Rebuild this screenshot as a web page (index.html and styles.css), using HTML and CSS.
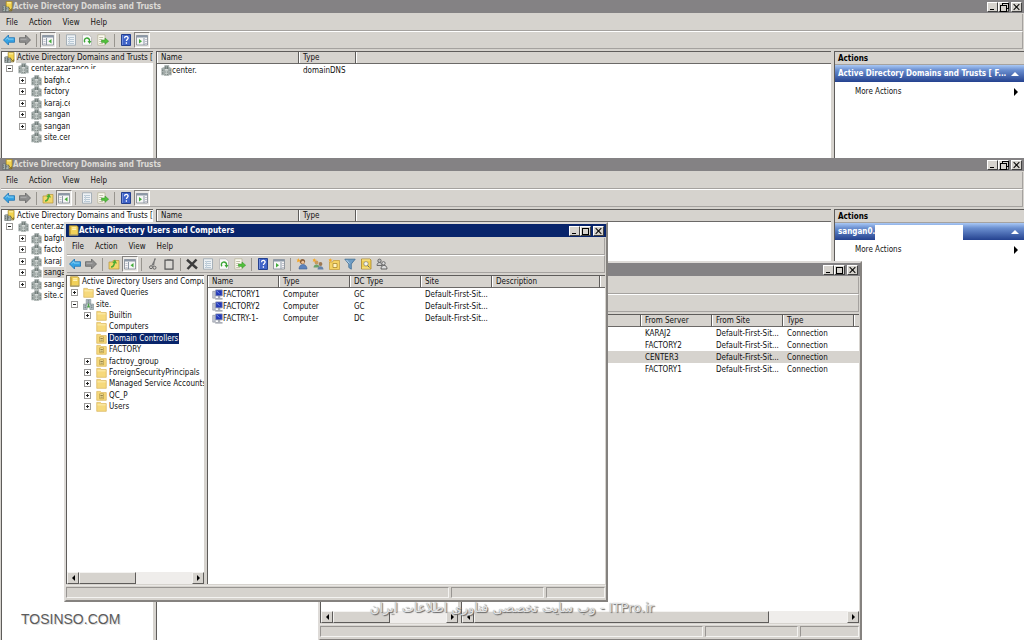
FILE: index.html
```html
<!DOCTYPE html>
<html lang="en">
<head>
    <meta charset="UTF-8">
    <meta name="viewport" content="width=device-width, initial-scale=1.0">
    <title>Active Directory</title>
    <link rel="stylesheet" href="styles.css">
</head>
<body>
    <svg class="sprite" aria-hidden="true">
        <symbol id="i-back" viewBox="0 0 12 12"><path d="M.5 6 5.500 1v2.700h6v4.600h-6V11z" fill="#35a3e4" stroke="#1f74b4" stroke-width=".8"/><path d="M2.500 5.700 5 3.500v1.600h5.500" fill="none" stroke="#9adcf8" stroke-width=".8"/></symbol>
        <symbol id="i-forward" viewBox="0 0 12 12"><path d="M11.500 6 6.500 1v2.700h-6v4.600h6V11z" fill="#8e8e8e" stroke="#666" stroke-width=".8"/><path d="M1.500 5.200h6" stroke="#bbb" stroke-width=".8"/></symbol>
        <symbol id="i-up" viewBox="0 0 12 12"><path d="M1 4h3l1-1.500h6V11H1z" fill="#f2d66a" stroke="#b8973a" stroke-width=".7"/><path d="M3 9c2 0 3-1.500 3.500-4" fill="none" stroke="#4cab35" stroke-width="1.500"/><path d="M4.200 5 7 1.500 9 5.500z" fill="#4cab35"/></symbol>
        <symbol id="i-tree" viewBox="0 0 12 12"><path d="M.5 1.500h11v9.500H.5z" fill="#f6f6f6" stroke="#7f8790" stroke-width=".8"/><path d="M.5 1.500h11v2H.5z" fill="#8b97a6"/><path d="M4.500 4v7" stroke="#8b97a6"/><path d="M1.500 5.500h2M1.500 7.500h2M1.500 9.500h2" stroke="#aab" stroke-width=".7"/><path d="M9.500 5v4.500L6.500 7.200z" fill="#43ac3a"/></symbol>
        <symbol id="i-pane" viewBox="0 0 12 12"><path d="M.5 1.500h11v9.500H.5z" fill="#f6f6f6" stroke="#7f8790" stroke-width=".8"/><path d="M.5 1.500h11v2H.5z" fill="#8b97a6"/><path d="M8 4v7" stroke="#8b97a6"/><path d="M9 5.500h2M9 7.500h2M9 9.500h2" stroke="#aab" stroke-width=".7"/><path d="M3 5v4.500l3-2.300z" fill="#43ac3a"/></symbol>
        <symbol id="i-props" viewBox="0 0 12 12"><path d="M1.500.8h9v10.400h-9z" fill="#eef2f5" stroke="#97a3ad" stroke-width=".8"/><path d="M3 3.500h6M3 5.500h6M3 7.500h6M3 9.500h6" stroke="#a9bccb" stroke-width=".8"/><path d="M4.500 3v7" stroke="#c5d2dc"/></symbol>
        <symbol id="i-refresh" viewBox="0 0 12 12"><path d="M1.500.8h6.500l2.500 2.500v8h-9z" fill="#fafafa" stroke="#b4b4b4" stroke-width=".8"/><path d="M4 8.300A2.600 2.600 0 1 1 8.500 7" fill="none" stroke="#3ba536" stroke-width="1.400"/><path d="M6.500 7h4L8.500 10z" fill="#3ba536"/></symbol>
        <symbol id="i-export" viewBox="0 0 12 12"><path d="M.8.8h7.200v10.400H.8z" fill="#fbfaf0" stroke="#b8b49a" stroke-width=".8"/><path d="M2.200 3.500h4M2.200 5.500h3M2.200 7.500h3M2.200 9.500h4" stroke="#aaa68c" stroke-width=".7"/><path d="M4.500 6h3.500V4l3.700 3.200L8 10.300V8.400H4.500z" fill="#52c13d" stroke="#349126" stroke-width=".5"/></symbol>
        <symbol id="i-help" viewBox="0 0 12 12"><path d="M1.500.5h9v11h-9z" fill="#3f63c8" stroke="#24408f"/><path d="M2.500 1v10" stroke="#8aa2e4" stroke-width=".7"/><path d="M4.500 4.200c.2-2.400 3.800-2.200 3.600 0-.1 1.200-1.700 1.400-1.700 2.800M6.400 8.300v1.500" fill="none" stroke="#fff" stroke-width="1.300"/></symbol>
        <symbol id="i-cut" viewBox="0 0 12 12"><path d="M8.500.5 5 7.500M7.800.5 6.500 7.500" stroke="#777" stroke-width="1.200"/><circle cx="4" cy="9.200" r="1.500" fill="none" stroke="#666"/><circle cx="7.500" cy="9.700" r="1.500" fill="none" stroke="#666"/></symbol>
        <symbol id="i-paste" viewBox="0 0 12 12"><path d="M2 2.200h8v9H2z" fill="#d9d7d3" stroke="#555" stroke-width="1.200"/><path d="M4 1h4v2H4z" fill="#777"/></symbol>
        <symbol id="i-delete" viewBox="0 0 12 12"><path d="m1 1.800 10 8.700M10.500 1.500 1.500 11" stroke="#3c3c3c" stroke-width="2.500"/></symbol>
        <symbol id="i-user" viewBox="0 0 12 12"><circle cx="6.500" cy="3.500" r="2.600" fill="#8a5f3a"/><circle cx="6.800" cy="4.300" r="1.500" fill="#edc39a"/><path d="M3 11c0-6 8-6 8 0z" fill="#5c83bd" stroke="#3d5f93" stroke-width=".6"/><path d="m2.500 0 .6 1.700 1.900.3-1.500 1 .2 1.800-1.200-1.200L.8 4.400l.8-1.600L.5 1.500h1.500z" fill="#f6a623"/></symbol>
        <symbol id="i-group" viewBox="0 0 12 12"><circle cx="4.500" cy="4.500" r="1.900" fill="#c99b5e"/><path d="M1.500 9.500c0-4 6-4 6 0z" fill="#6ba26b"/><circle cx="8.500" cy="6" r="1.900" fill="#9c7752"/><path d="M5.500 11.500c0-4.500 6-4.500 6 0z" fill="#6783a8"/><path d="m2.300 0 .6 1.500 1.800.3-1.400 1-.2 1.500-1-1-1.400.5.600-1.500L.5 1.300H2z" fill="#f6a623"/></symbol>
        <symbol id="i-newou" viewBox="0 0 12 12"><path d="M1.500 4h3l1-1.500h6v9h-10z" fill="#f5d364" stroke="#c39a32" stroke-width=".7"/><path d="M5 5.500h4v4H5z" fill="#fff3c0" stroke="#a07c22" stroke-width=".7"/><path d="m2.300 0 .6 1.500 1.800.3-1.400 1-.2 1.500-1-1-1.400.5.600-1.500L.5 1.300H2z" fill="#f6a623"/></symbol>
        <symbol id="i-filter" viewBox="0 0 12 12"><path d="M.8 1.200h10.400L7.300 6v5.200L4.800 9.500V6z" fill="#6f9dc4" stroke="#3f6d96" stroke-width=".8"/><path d="m2.500 2 3 3.500" stroke="#bdd8ec"/></symbol>
        <symbol id="i-find" viewBox="0 0 12 12"><path d="M1.500 1h8.500l1 1v9H1.500z" fill="#f1cf50" stroke="#a9852c" stroke-width=".8"/><path d="M2 2h8M2 10h8" stroke="#fff0ae" stroke-width=".8"/><circle cx="6" cy="5.800" r="2.200" fill="#f7f7f0" stroke="#8a8a7a" stroke-width=".8"/><path d="m7.500 7.500 2 2" stroke="#666"/></symbol>
        <symbol id="i-addgroup" viewBox="0 0 12 12"><circle cx="3.500" cy="2.800" r="1.700" fill="#bbb" stroke="#555" stroke-width=".8"/><path d="M1 7.500c0-4 5-4 5 0z" fill="#ccc" stroke="#555" stroke-width=".8"/><circle cx="7.500" cy="5.300" r="1.700" fill="#ddd" stroke="#555" stroke-width=".8"/><path d="M5 11c0-5 6-5 6 0z" fill="#ddd" stroke="#555" stroke-width=".9"/></symbol>
        <symbol id="i-domain" viewBox="0 0 12 12"><path d="M4 .5 8.500.3v4H4zM.8 3.500 4 2.500v8l-3.200.5zM8 2.500l3.200 1V11L8 10.500z" fill="#a9b3b1" stroke="#87908e" stroke-width=".5"/><path d="M3.800 5.700h4.400v6H3.800z" fill="#d3dbd8" stroke="#7d8684" stroke-width=".5"/><path d="M5.200 1.300v3M7 1.300v3M1.900 5v1.500M1.900 8v1.500M10 5v1.500M10 8v1.500M5.200 7v1.400M5.200 9.500V11M7 7v1.400M7 9.500V11" stroke="#535d5b" stroke-width=".8"/></symbol>
        <symbol id="i-site" viewBox="0 0 12 12"><path d="M3.500.5h5V5h-5zM.5 5.500h4v6h-4zM7.500 5.500h4v6h-4z" fill="#b9c6c9" stroke="#6c7b80" stroke-width=".6"/><path d="M6 5v3.500M4.500 8.500h3" stroke="#49a046" stroke-width="1.400"/><path d="M5 2h2M5 3.500h2M1.600 7.500h1.800M8.600 7.500h1.800M1.600 9.500h1.800M8.600 9.500h1.800" stroke="#44525a" stroke-width=".7"/></symbol>
        <symbol id="i-trusts" viewBox="0 0 12 12"><path d="M4.500.5h6.500v9.500H4.500z" fill="#f3d44e" stroke="#9d7f22" stroke-width=".7"/><path d="M5.500 2h4.500" stroke="#fff6bf"/><path d="M.8 5.500 4 5v6.500H.8zM4 6.500h3.500v5H4z" fill="#aab5b3" stroke="#555e5c" stroke-width=".6"/><path d="M1.800 7v1M1.800 9v1M5.200 8v1" stroke="#333" stroke-width=".8"/><path d="m7 7 3.500 3.500M10.500 8v2.800H8" stroke="#7c6a28" fill="none" stroke-width=".9"/></symbol>
        <symbol id="i-book" viewBox="0 0 12 12"><path d="M1.500.8h8L11 2v9.200H1.500z" fill="#f1d15a" stroke="#a98a2f" stroke-width=".8"/><path d="M2.500 1.500v9" stroke="#c7a033"/><path d="M4.500 3h4.500M4.500 4.800h4.500" stroke="#fff3b8" stroke-width="1.200"/><path d="M1.500 11h9.500" stroke="#8c8f86"/></symbol>
        <symbol id="i-folder" viewBox="0 0 12 12"><path d="M.8 1.500h4l1 1.300h5.400v8.500H.8z" fill="#f6d97c" stroke="#d6b155" stroke-width=".7"/><path d="M1.500 4.200h9" stroke="#fdf0b8"/></symbol>
        <symbol id="i-ou" viewBox="0 0 12 12"><path d="M.8 1.500h4l1 1.300h5.400v8.500H.8z" fill="#f6d97c" stroke="#d6b155" stroke-width=".7"/><path d="M4 4.200h4.300v5.300H4z" fill="#fbe9a0" stroke="#a98a2f" stroke-width=".7"/><path d="M4.800 6h2.700M4.800 7.800h2.700" stroke="#6d5c26" stroke-width=".8"/></symbol>
        <symbol id="i-computer" viewBox="0 0 12 12"><path d="M.8 2.500h2.700v7.500H.8z" fill="#c9cdd6" stroke="#7b8090" stroke-width=".6"/><path d="M4 1h7.200v6.500H4z" fill="#2338b8" stroke="#8f95a8" stroke-width=".8"/><path d="m5 2 3 3" stroke="#7f9bf0"/><path d="M6.500 8h2.500v1.500H6.500zM3.500 10h8v1.500h-8z" fill="#8e94a0"/></symbol>
    </svg>

    <!-- Domains and Trusts, top -->
    <section class="window first">
        <header class="titlebar">
            <svg class="icon"><use href="#i-trusts"/></svg>
            <h1>Active Directory Domains and Trusts</h1>
            <button class="win-btn min" aria-label="Minimize"></button>
            <button class="win-btn restore" aria-label="Restore"></button>
            <button class="win-btn close" aria-label="Close"></button>
        </header>
        <nav class="menubar">
            <button>File</button><button>Action</button><button>View</button><button>Help</button>
        </nav>
        <div class="toolbar">
            <button aria-label="Back"><svg><use href="#i-back"/></svg></button>
            <button aria-label="Forward"><svg><use href="#i-forward"/></svg></button>
            <span class="sep"></span>
            <button class="pressed" aria-label="Console tree"><svg><use href="#i-tree"/></svg></button>
            <span class="sep"></span>
            <button aria-label="Properties"><svg><use href="#i-props"/></svg></button>
            <button aria-label="Refresh"><svg><use href="#i-refresh"/></svg></button>
            <button aria-label="Export list"><svg><use href="#i-export"/></svg></button>
            <span class="sep"></span>
            <button aria-label="Help"><svg><use href="#i-help"/></svg></button>
            <button class="pressed" aria-label="Action pane"><svg><use href="#i-pane"/></svg></button>
        </div>
        <div class="panes">
            <div class="pane">
                <ul class="tree">
                    <li class="root"><svg class="icon"><use href="#i-trusts"/></svg><span class="lit">Active Directory Domains and Trusts [ F</span></li>
                    <li><i class="box"></i><svg class="icon"><use href="#i-domain"/></svg><span class="half">center.azaranco.ir</span></li>
                    <li class="sub"><i class="box plus"></i><svg class="icon"><use href="#i-domain"/></svg><span class="cut">bafgh.c</span></li>
                    <li class="sub"><i class="box plus"></i><svg class="icon"><use href="#i-domain"/></svg><span class="cut">factory</span></li>
                    <li class="sub"><i class="box plus"></i><svg class="icon"><use href="#i-domain"/></svg><span class="cut">karaj.ce</span></li>
                    <li class="sub"><i class="box plus"></i><svg class="icon"><use href="#i-domain"/></svg><span class="cut">sangan</span></li>
                    <li class="sub"><i class="box plus"></i><svg class="icon"><use href="#i-domain"/></svg><span class="cut">sangan</span></li>
                    <li class="sub"><i class="box none"></i><svg class="icon"><use href="#i-domain"/></svg><span class="cut">site.cer</span></li>
                </ul>
            </div>
            <div class="pane">
                <table class="list">
                    <colgroup><col class="c-wide"><col class="c-short"><col></colgroup>
                    <thead><tr><th>Name</th><th>Type</th><th></th></tr></thead>
                    <tbody><tr><td><svg class="icon"><use href="#i-domain"/></svg>center.</td><td>domainDNS</td><td></td></tr></tbody>
                </table>
            </div>
            <aside class="pane actions">
                <h2>Actions</h2>
                <button class="group"><span>Active Directory Domains and Trusts [ F...</span><i class="up"></i></button>
                <button class="more">More Actions<i class="right"></i></button>
            </aside>
        </div>
    </section>

    <!-- Domains and Trusts, bottom -->
    <section class="window second">
        <header class="titlebar">
            <svg class="icon"><use href="#i-trusts"/></svg>
            <h1>Active Directory Domains and Trusts</h1>
            <button class="win-btn min" aria-label="Minimize"></button>
            <button class="win-btn restore" aria-label="Restore"></button>
            <button class="win-btn close" aria-label="Close"></button>
        </header>
        <nav class="menubar">
            <button>File</button><button>Action</button><button>View</button><button>Help</button>
        </nav>
        <div class="toolbar">
            <button aria-label="Back"><svg><use href="#i-back"/></svg></button>
            <button aria-label="Forward"><svg><use href="#i-forward"/></svg></button>
            <span class="sep"></span>
            <button aria-label="Up one level"><svg><use href="#i-up"/></svg></button>
            <button class="pressed" aria-label="Console tree"><svg><use href="#i-tree"/></svg></button>
            <span class="sep"></span>
            <button aria-label="Properties"><svg><use href="#i-props"/></svg></button>
            <button aria-label="Export list"><svg><use href="#i-export"/></svg></button>
            <span class="sep"></span>
            <button aria-label="Help"><svg><use href="#i-help"/></svg></button>
            <button class="pressed" aria-label="Action pane"><svg><use href="#i-pane"/></svg></button>
        </div>
        <div class="panes">
            <div class="pane">
                <ul class="tree">
                    <li class="root"><svg class="icon"><use href="#i-trusts"/></svg><span>Active Directory Domains and Trusts [ F</span></li>
                    <li><i class="box"></i><svg class="icon"><use href="#i-domain"/></svg><span>center.az</span></li>
                    <li class="sub"><i class="box plus"></i><svg class="icon"><use href="#i-domain"/></svg><span>bafgh</span></li>
                    <li class="sub"><i class="box plus"></i><svg class="icon"><use href="#i-domain"/></svg><span>facto</span></li>
                    <li class="sub"><i class="box plus"></i><svg class="icon"><use href="#i-domain"/></svg><span>karaj</span></li>
                    <li class="sub"><i class="box plus"></i><svg class="icon"><use href="#i-domain"/></svg><span class="lit">sanga</span></li>
                    <li class="sub"><i class="box plus"></i><svg class="icon"><use href="#i-domain"/></svg><span>sanga</span></li>
                    <li class="sub"><i class="box none"></i><svg class="icon"><use href="#i-domain"/></svg><span>site.c</span></li>
                </ul>
            </div>
            <div class="pane">
                <table class="list">
                    <colgroup><col class="c-wide"><col class="c-short"><col></colgroup>
                    <thead><tr><th>Name</th><th>Type</th><th></th></tr></thead>
                </table>
            </div>
            <aside class="pane actions">
                <h2>Actions</h2>
                <button class="group"><span>sangan0.</span><b class="blank"></b><i class="up"></i></button>
                <button class="more">More Actions<i class="right"></i></button>
            </aside>
        </div>
    </section>

    <!-- Connections window, behind -->
    <section class="window floating connections">
        <header class="titlebar">
            <h1></h1>
            <button class="win-btn min" aria-label="Minimize"></button>
            <button class="win-btn max" aria-label="Maximize"></button>
            <button class="win-btn close" aria-label="Close"></button>
        </header>
        <nav class="menubar"></nav>
        <div class="toolbar"></div>
        <div class="panes">
            <div class="pane">
                <div class="scrollbar"><button class="left" aria-label="Scroll left"></button><div class="track"><div class="thumb"></div></div><button class="right" aria-label="Scroll right"></button></div>
            </div>
            <div class="pane">
                <table class="list">
                    <colgroup><col class="c-desc"><col class="c"><col class="c"><col class="c"><col class="c"><col></colgroup>
                    <thead><tr><th></th><th></th><th>From Server</th><th>From Site</th><th>Type</th><th></th></tr></thead>
                    <tbody>
                        <tr><td></td><td></td><td>KARAJ2</td><td>Default-First-Sit...</td><td>Connection</td><td></td></tr>
                        <tr><td></td><td></td><td>FACTORY2</td><td>Default-First-Sit...</td><td>Connection</td><td></td></tr>
                        <tr class="picked"><td></td><td></td><td>CENTER3</td><td>Default-First-Sit...</td><td>Connection</td><td></td></tr>
                        <tr><td></td><td></td><td>FACTORY1</td><td>Default-First-Sit...</td><td>Connection</td><td></td></tr>
                    </tbody>
                </table>
                <div class="scrollbar"><button class="left" aria-label="Scroll left"></button><div class="track"><div class="thumb long"></div></div><button class="right" aria-label="Scroll right"></button></div>
            </div>
        </div>
        <footer class="statusbar"><span></span><span></span><span></span></footer>
    </section>

    <!-- Users and Computers, in front -->
    <section class="window floating users">
        <header class="titlebar">
            <svg class="icon"><use href="#i-book"/></svg>
            <h1>Active Directory Users and Computers</h1>
            <button class="win-btn min" aria-label="Minimize"></button>
            <button class="win-btn max" aria-label="Maximize"></button>
            <button class="win-btn close" aria-label="Close"></button>
        </header>
        <nav class="menubar">
            <button>File</button><button>Action</button><button>View</button><button>Help</button>
        </nav>
        <div class="toolbar">
            <button aria-label="Back"><svg><use href="#i-back"/></svg></button>
            <button aria-label="Forward"><svg><use href="#i-forward"/></svg></button>
            <span class="sep"></span>
            <button aria-label="Up one level"><svg><use href="#i-up"/></svg></button>
            <button class="pressed" aria-label="Console tree"><svg><use href="#i-tree"/></svg></button>
            <span class="sep"></span>
            <button aria-label="Cut"><svg><use href="#i-cut"/></svg></button>
            <button aria-label="Paste"><svg><use href="#i-paste"/></svg></button>
            <span class="sep"></span>
            <button aria-label="Delete"><svg><use href="#i-delete"/></svg></button>
            <button aria-label="Properties"><svg><use href="#i-props"/></svg></button>
            <button aria-label="Refresh"><svg><use href="#i-refresh"/></svg></button>
            <button aria-label="Export list"><svg><use href="#i-export"/></svg></button>
            <span class="sep"></span>
            <button aria-label="Help"><svg><use href="#i-help"/></svg></button>
            <button aria-label="Action pane"><svg><use href="#i-pane"/></svg></button>
            <span class="sep"></span>
            <button aria-label="New user"><svg><use href="#i-user"/></svg></button>
            <button aria-label="New group"><svg><use href="#i-group"/></svg></button>
            <button aria-label="New organizational unit"><svg><use href="#i-newou"/></svg></button>
            <button aria-label="Filter"><svg><use href="#i-filter"/></svg></button>
            <button aria-label="Find"><svg><use href="#i-find"/></svg></button>
            <button aria-label="Add to group"><svg><use href="#i-addgroup"/></svg></button>
        </div>
        <div class="panes">
            <div class="pane">
                <ul class="tree long">
                    <li class="root"><svg class="icon"><use href="#i-book"/></svg><span>Active Directory Users and Comput</span></li>
                    <li><i class="box plus"></i><svg class="icon"><use href="#i-folder"/></svg><span>Saved Queries</span></li>
                    <li><i class="box"></i><svg class="icon"><use href="#i-site"/></svg><span>site.</span></li>
                    <li class="sub"><i class="box plus"></i><svg class="icon"><use href="#i-folder"/></svg><span>Builtin</span></li>
                    <li class="sub"><i class="box none"></i><svg class="icon"><use href="#i-folder"/></svg><span>Computers</span></li>
                    <li class="sub"><i class="box none"></i><svg class="icon"><use href="#i-ou"/></svg><span class="selected">Domain Controllers</span></li>
                    <li class="sub"><i class="box none"></i><svg class="icon"><use href="#i-ou"/></svg><span>FACTORY</span></li>
                    <li class="sub"><i class="box plus"></i><svg class="icon"><use href="#i-ou"/></svg><span>factroy_group</span></li>
                    <li class="sub"><i class="box plus"></i><svg class="icon"><use href="#i-folder"/></svg><span>ForeignSecurityPrincipals</span></li>
                    <li class="sub"><i class="box plus"></i><svg class="icon"><use href="#i-folder"/></svg><span>Managed Service Accounts</span></li>
                    <li class="sub"><i class="box plus"></i><svg class="icon"><use href="#i-ou"/></svg><span>QC_P</span></li>
                    <li class="sub"><i class="box plus"></i><svg class="icon"><use href="#i-folder"/></svg><span>Users</span></li>
                </ul>
                <div class="scrollbar"><button class="left" aria-label="Scroll left"></button><div class="track"><div class="thumb"></div></div><button class="right" aria-label="Scroll right"></button></div>
            </div>
            <div class="pane">
                <table class="list">
                    <colgroup><col class="c"><col class="c"><col class="c"><col class="c"><col class="c-desc"><col></colgroup>
                    <thead><tr><th>Name</th><th>Type</th><th>DC Type</th><th>Site</th><th>Description</th><th></th></tr></thead>
                    <tbody>
                        <tr><td><svg class="icon"><use href="#i-computer"/></svg>FACTORY1</td><td>Computer</td><td>GC</td><td>Default-First-Sit...</td><td></td><td></td></tr>
                        <tr><td><svg class="icon"><use href="#i-computer"/></svg>FACTORY2</td><td>Computer</td><td>GC</td><td>Default-First-Sit...</td><td></td><td></td></tr>
                        <tr><td><svg class="icon"><use href="#i-computer"/></svg>FACTRY-1-</td><td>Computer</td><td>DC</td><td>Default-First-Sit...</td><td></td><td></td></tr>
                    </tbody>
                </table>
            </div>
        </div>
        <footer class="statusbar"><span></span><span></span><span></span></footer>
    </section>

    <p class="mark site">TOSINSO.COM</p>
    <p class="mark itpro" dir="rtl" lang="fa">ITPro.ir - وب سایت تخصصی فناوری اطلاعات ایران</p>
</body>
</html>
```
FILE: styles.css
```css
* {
    box-sizing: border-box;
}
body {
    margin: 0;
    height: 100vh;
    overflow: hidden;
    display: flex;
    flex-direction: column;
    position: relative;
    background-color: #d6d3ce;
    color: #111;
    font-family: "DejaVu Sans Condensed", "DejaVu Sans", Tahoma, sans-serif;
    font-size: 8px;
    line-height: 12px;
}
button {
    font: inherit;
    color: inherit;
    background: none;
    border: none;
    padding: 0;
    margin: 0;
}
.sprite {
    position: absolute;
    width: 0;
    height: 0;
}
.icon {
    width: 11px;
    height: 11px;
    flex: none;
}

/* windows */
.window {
    display: flex;
    flex-direction: column;
    background-color: #d6d3ce;
}
.second {
    flex: 1;
}
.floating {
    position: absolute;
    width: 544px;
    height: 380px;
    border: 2px solid #dedbd8;
    border-right-color: #85827f;
    border-bottom-color: #85827f;
}
.users {
    left: 64px;
    top: 222px;
}
.connections {
    left: 318px;
    top: 261px;
}

.titlebar {
    display: flex;
    align-items: center;
    height: 13px;
    padding: 0 2px;
    background-color: #848284;
    color: #dcdad6;
}
.users .titlebar {
    background-color: #08246b;
    color: white;
}
.titlebar h1 {
    flex: 1;
    margin: 0;
    font-size: 8px;
    line-height: 13px;
}
.win-btn {
    position: relative;
    width: 11px;
    height: 10px;
    background-color: #d6d3ce;
    border: 1px solid white;
    border-right-color: #404040;
    border-bottom-color: #404040;
}
.win-btn.close {
    margin-left: 2px;
}
.win-btn::before,
.win-btn::after {
    content: "";
    position: absolute;
}
.min::before {
    left: 2px;
    bottom: 1px;
    width: 4px;
    height: 1px;
    background-color: black;
}
.max::before {
    inset: 1px 1px 0 1px;
    border: 1px solid black;
}
.restore::before {
    left: 3px;
    top: 0;
    width: 5px;
    height: 4px;
    border: 1px solid black;
}
.restore::after {
    left: 1px;
    top: 2px;
    width: 5px;
    height: 5px;
    border: 1px solid black;
    background-color: #d6d3ce;
}
.close::before,
.close::after {
    left: 4px;
    top: 0;
    width: 1px;
    height: 8px;
    background-color: black;
    transform: rotate(45deg);
}
.close::after {
    transform: rotate(-45deg);
}

.menubar {
    display: flex;
    align-items: center;
    gap: 1px;
    height: 17px;
    margin: 1px 1px 0 1px;
    padding-top: 2px;
    border-right: 1px solid #a5a29f;
    border-bottom: 1px solid #a5a29f;
}
.menubar button {
    padding: 0 5px;
}
.toolbar {
    display: flex;
    align-items: center;
    height: 18px;
    margin: 0 1px 2px 1px;
    border-top: 1px solid white;
    border-right: 1px solid #a5a29f;
    border-bottom: 1px solid #a5a29f;
}
.toolbar button {
    display: flex;
    align-items: center;
    justify-content: center;
    width: 16px;
    height: 16px;
}
.toolbar button.pressed {
    background-color: #eceae7;
    border: 1px solid #85827f;
    border-right-color: white;
    border-bottom-color: white;
}
.toolbar svg {
    width: 12px;
    height: 12px;
    flex: none;
}
.sep {
    width: 1px;
    height: 13px;
    margin: 0 3px;
    background-color: #98958f;
}

/* panes */
.panes {
    flex: 1;
    min-height: 107px;
    display: grid;
    grid-template-columns: 152px 1fr 190px;
    gap: 3px;
    padding-left: 1px;
}
.floating .panes {
    grid-template-columns: 138px 1fr;
    padding: 0 1px 1px 0;
}
.pane {
    display: flex;
    flex-direction: column;
    min-width: 0;
    min-height: 0;
    background-color: white;
    border-top: 1px solid #5e5c5a;
    border-left: 1px solid #5e5c5a;
    overflow: hidden;
}
.tree {
    list-style: none;
    margin: 0;
    padding: 0;
    height: 91px;
    display: flex;
    flex-direction: column;
    justify-content: space-between;
}
.tree.long {
    height: 136px;
}
.tree li {
    display: flex;
    align-items: center;
    height: 11px;
    line-height: 11px;
    padding-left: 4px;
    white-space: nowrap;
}
.tree li.root {
    padding-left: 2px;
}
.tree li.sub {
    padding-left: 17px;
}
.tree li span {
    padding: 0 1px;
    margin-left: 1px;
}
.tree .lit {
    background-color: #d6d3ce;
}
.tree .selected {
    background-color: #08246b;
    color: white;
}
.cut {
    width: 27px;
    overflow: hidden;
}
.half {
    position: relative;
}
.half::after {
    content: "";
    position: absolute;
    left: 40px;
    right: 0;
    bottom: 0;
    height: 5px;
    background-color: white;
}
.box {
    position: relative;
    flex: none;
    width: 7px;
    height: 7px;
    margin-right: 5px;
    border: 1px solid #9c9a98;
}
.box::before,
.box.plus::after {
    content: "";
    position: absolute;
    left: 1px;
    top: 2px;
    width: 3px;
    height: 1px;
    background-color: #222;
}
.box.plus::after {
    left: 2px;
    top: 1px;
    width: 1px;
    height: 3px;
}
.box.none {
    visibility: hidden;
}

.list {
    width: 100%;
    table-layout: fixed;
    border-collapse: separate;
    border-spacing: 0;
}
.list th,
.list td {
    height: 12px;
    padding: 0 0 0 4px;
    line-height: 11px;
    font-weight: normal;
    text-align: left;
    white-space: nowrap;
    overflow: hidden;
}
.list th {
    background-color: #d6d3ce;
    border-bottom: 1px solid #6b6967;
    border-right: 1px solid #5e5c5a;
    box-shadow: inset 1px 0 0 white;
}
.list th:last-child {
    border-right: none;
}
.list td .icon {
    vertical-align: top;
}
.picked td {
    background-color: #d6d3ce;
}
.c-wide {
    width: 142px;
}
.c-short {
    width: 57px;
}
.c {
    width: 71px;
}
.c-desc {
    width: 108px;
}

.actions h2 {
    margin: 0;
    padding-left: 3px;
    height: 13px;
    font-size: 8px;
    line-height: 13px;
    color: black;
    background-color: #d6d3ce;
    border-bottom: 1px solid #a5a29f;
}
.group {
    display: flex;
    align-items: center;
    height: 17px;
    padding: 0 5px 0 3px;
    font-weight: bold;
    color: white;
    white-space: nowrap;
    background-image: linear-gradient(#a9c8f5, #6b8fd0 30%, #24428f);
}
.blank {
    align-self: stretch;
    width: 88px;
    margin-top: 2px;
    background-color: white;
}
.up {
    margin-left: auto;
    border: 4px solid transparent;
    border-top: none;
    border-bottom-color: white;
}
.more {
    display: flex;
    align-items: center;
    justify-content: space-between;
    height: 19px;
    padding: 0 6px 0 20px;
}
.more .right {
    border: 4px solid transparent;
    border-right: none;
    border-left-color: black;
}

.scrollbar {
    display: flex;
    height: 12px;
    margin-top: auto;
    background-color: #efedeb;
}
.scrollbar button,
.thumb {
    background-color: #d6d3ce;
    border: 1px solid #f4f3f1;
    border-right-color: #5e5c5a;
    border-bottom-color: #5e5c5a;
}
.scrollbar button {
    display: flex;
    align-items: center;
    justify-content: center;
    width: 12px;
}
.scrollbar button::before {
    content: "";
    border: 3px solid transparent;
}
.scrollbar .left::before {
    border-left: none;
    border-right-color: black;
}
.scrollbar .right::before {
    border-right: none;
    border-left-color: black;
}
.track {
    flex: 1;
}
.thumb {
    width: 50%;
    height: 100%;
}
.thumb.long {
    width: 79%;
}

.statusbar {
    display: grid;
    grid-template-columns: 1fr 93px 59px;
    gap: 2px;
    height: 15px;
    padding: 1px 1px 2px 0;
    border-top: 1px solid #e9e7e4;
}
.statusbar span {
    border: 1px solid #989592;
    border-right-color: #f4f3f1;
    border-bottom-color: #f4f3f1;
}

/* watermarks */
.mark {
    position: absolute;
    margin: 0;
    white-space: nowrap;
}
.mark.site {
    left: 21px;
    top: 610px;
    font-family: "Liberation Sans", Arial, sans-serif;
    font-size: 14px;
    line-height: 18px;
    color: #5c5c5c;
    text-shadow: 1px 1px 0 #ddd;
}
.mark.itpro {
    left: 370px;
    top: 598px;
    font-family: "DejaVu Sans", sans-serif;
    font-size: 13px;
    line-height: 20px;
    color: #e4e4e4;
    text-shadow: 1px 1px 1px #666, 0 0 1px #888;
}
```
